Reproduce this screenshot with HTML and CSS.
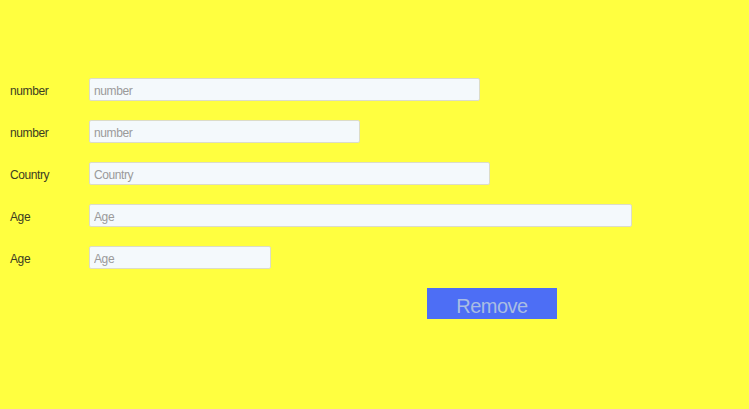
FILE: index.html
```html
<!DOCTYPE html>
<html>
<head>
<meta charset="utf-8">
<link rel="stylesheet" href="styles.css">
</head>
<body>
<form class="form">
  <div class="row"><label class="lbl">number</label><input class="inp w1" placeholder="number"></div>
  <div class="row"><label class="lbl">number</label><input class="inp w2" placeholder="number"></div>
  <div class="row"><label class="lbl">Country</label><input class="inp w3" placeholder="Country"></div>
  <div class="row"><label class="lbl">Age</label><input class="inp w4" placeholder="Age"></div>
  <div class="row"><label class="lbl">Age</label><input class="inp w5" placeholder="Age"></div>
  <div class="actions"><button type="button" class="btn">Remove</button></div>
</form>
</body>
</html>
```
FILE: styles.css
```css
html, body {
  margin: 0;
  padding: 0;
  background: #ffff40;
  height: 100%;
}
body {
  font-family: "Liberation Sans", Arial, sans-serif;
}
.form {
  display: flex;
  flex-direction: column;
  gap: 19px;
  padding: 78px 0 0 10px;
}
.row {
  display: flex;
  align-items: center;
  height: 23px;
}
.lbl {
  width: 79px;
  padding-top: 3px;
  font-size: 12px;
  color: #3c3c22;
  letter-spacing: -0.4px;
}
.inp {
  box-sizing: border-box;
  height: 23px;
  margin: 0;
  padding: 3px 4px 0;
  border: 1px solid #dcdcc8;
  border-radius: 2px;
  background: #f4f9fc;
  font-family: "Liberation Sans", Arial, sans-serif;
  font-size: 12px;
  color: #333;
  letter-spacing: -0.4px;
}
.inp::placeholder { color: #9a9a9a; }
.w1 { width: 391px; }
.w2 { width: 271px; }
.w3 { width: 401px; }
.w4 { width: 543px; }
.w5 { width: 182px; }
.actions {
  display: flex;
  padding-left: 417px;
}
.btn {
  width: 130px;
  height: 31px;
  border: none;
  margin: 0;
  padding: 5px 0 0;
  background: #4d6ef5;
  color: #a9bde3;
  font-family: "Liberation Sans", Arial, sans-serif;
  font-size: 20px;
  letter-spacing: -0.5px;
}
```
